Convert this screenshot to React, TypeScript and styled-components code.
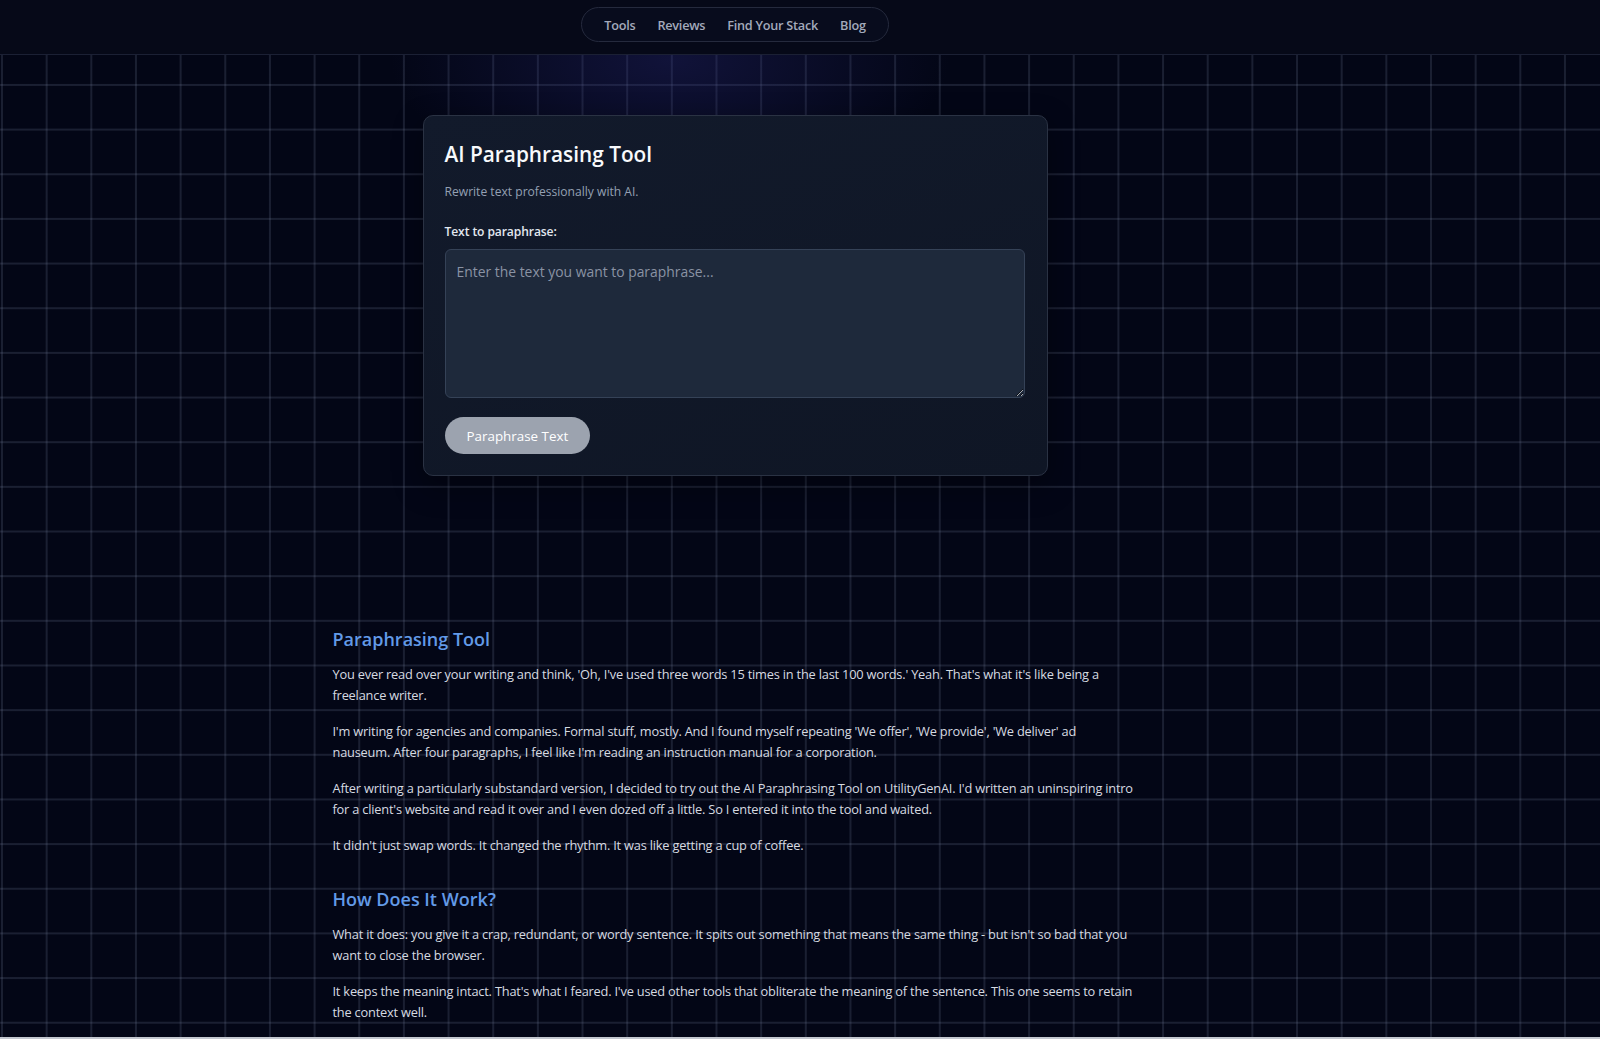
import { useState } from "react";
import styled, { createGlobalStyle } from "styled-components";

const GlobalStyle = createGlobalStyle`
  html, body {
    margin: 0;
    padding: 0;
  }

  body {
    min-height: 100vh;
    background-color: #030616;
    background-image:
      radial-gradient(ellipse 280px 130px at 670px 60px, rgba(45, 45, 130, 0.33), transparent 100%),
      linear-gradient(to right, rgba(120, 132, 160, 0.2) 1.5px, transparent 1.5px),
      linear-gradient(to bottom, rgba(120, 132, 160, 0.2) 1.5px, transparent 1.5px);
    background-size: auto, 44.66px 44.66px, 44.66px 44.66px;
    background-position: 0 0, 1px 39.3px, 1px 39.3px;
    font-family: "Open Sans", "Noto Sans", sans-serif;
    color: #d1d5db;
    overflow: hidden;
  }
`;

const Header = styled.header`
  height: 55px;
  box-sizing: border-box;
  border-bottom: 1px solid #1b2034;
  background: #060918;
  padding: 7px 130px 0 0;
  display: flex;
  justify-content: center;
  align-items: flex-start;
`;

const NavPill = styled.nav`
  display: flex;
  align-items: center;
  gap: 22px;
  height: 35px;
  padding: 0 22px;
  box-sizing: border-box;
  border: 1px solid #252a3d;
  border-radius: 18px;
  background: #080c1d;
`;

const NavLink = styled.a`
  font-size: 12.7px;
  font-weight: 600;
  letter-spacing: -0.25px;
  color: #a3aabb;
  text-decoration: none;
  cursor: pointer;
`;

const Page = styled.main`
  padding-right: 130px;
  display: flex;
  flex-direction: column;
  align-items: center;
`;

const Card = styled.section`
  width: 625px;
  box-sizing: border-box;
  margin-top: 60px;
  padding: 23.5px 22px 20.4px 21px;
  border: 1px solid #2a3243;
  border-radius: 10px;
  background: linear-gradient(160deg, #121a2b 0%, #0f1625 100%);
  box-shadow: 0 10px 30px rgba(0, 0, 0, 0.35);
  display: flex;
  flex-direction: column;
  align-items: flex-start;
`;

const CardTitle = styled.h1`
  margin: 0;
  font-size: 20.8px;
  line-height: 28px;
  font-weight: 600;
  color: #f8fafc;
`;

const CardSubtitle = styled.p`
  margin: 14px 0 0;
  font-size: 12.1px;
  line-height: 20px;
  color: #94a0b3;
`;

const Label = styled.label`
  margin-top: 20px;
  font-size: 12.1px;
  line-height: 20px;
  font-weight: 600;
  letter-spacing: -0.1px;
  color: #e2e8f0;
`;

const TextArea = styled.textarea`
  margin-top: 7.7px;
  width: 100%;
  height: 148.4px;
  box-sizing: border-box;
  padding: 10px 11px;
  border: 1px solid #354257;
  border-radius: 6px;
  background: #1e293b;
  color: #e2e8f0;
  font-family: "Open Sans", "Noto Sans", sans-serif;
  font-size: 13.9px;
  line-height: 24px;
  outline: none;

  &::placeholder {
    color: #8a93a4;
  }
`;

const Button = styled.button<{ $disabled: boolean }>`
  margin-top: 19.6px;
  height: 37px;
  padding: 0 22px;
  border: none;
  border-radius: 999px;
  background: ${(p) => (p.$disabled ? "#9ca3af" : "#3b82f6")};
  color: #ffffff;
  font-family: "Open Sans", "Noto Sans", sans-serif;
  font-size: 13.4px;
  font-weight: 500;
  cursor: ${(p) => (p.$disabled ? "not-allowed" : "pointer")};
`;

const Article = styled.article`
  width: 802px;
  margin-top: 149px;
  margin-right: 3px;
`;

const SectionHeading = styled.h2<{ $first?: boolean }>`
  margin: ${(p) => (p.$first ? "0" : "29px")} 0 11.6px;
  font-size: 18px;
  line-height: 28px;
  font-weight: 600;
  color: #629ae8;
`;

const Paragraph = styled.p`
  margin: 0 0 16px;
  font-size: 12.8px;
  letter-spacing: -0.2px;
  line-height: 20.5px;
  color: #d6dae1;
`;

const BottomEdge = styled.div`
  position: fixed;
  left: 0;
  right: 0;
  bottom: 0;
  height: 2px;
  background: #c3c7cf;
`;

const navItems = ["Tools", "Reviews", "Find Your Stack", "Blog"];

export default function App() {
  const [text, setText] = useState("");

  return (
    <>
      <GlobalStyle />
      <Header>
        <NavPill>
          {navItems.map((item) => (
            <NavLink key={item}>{item}</NavLink>
          ))}
        </NavPill>
      </Header>

      <Page>
        <Card>
          <CardTitle>AI Paraphrasing Tool</CardTitle>
          <CardSubtitle>Rewrite text professionally with AI.</CardSubtitle>
          <Label htmlFor="paraphrase-input">Text to paraphrase:</Label>
          <TextArea
            id="paraphrase-input"
            placeholder="Enter the text you want to paraphrase..."
            value={text}
            onChange={(e) => setText(e.target.value)}
          />
          <Button $disabled={!text.trim()} disabled={!text.trim()}>
            Paraphrase Text
          </Button>
        </Card>

        <Article>
          <SectionHeading $first>Paraphrasing Tool</SectionHeading>
          <Paragraph>
            You ever read over your writing and think, 'Oh, I've used three words 15 times in the
            last 100 words.' Yeah. That's what it's like being a freelance writer.
          </Paragraph>
          <Paragraph>
            I'm writing for agencies and companies. Formal stuff, mostly. And I found myself
            repeating 'We offer', 'We provide', 'We deliver' ad nauseum. After four paragraphs, I
            feel like I'm reading an instruction manual for a corporation.
          </Paragraph>
          <Paragraph>
            After writing a particularly substandard version, I decided to try out the AI
            Paraphrasing Tool on UtilityGenAI. I'd written an uninspiring intro for a client's
            website and read it over and I even dozed off a little. So I entered it into the tool
            and waited.
          </Paragraph>
          <Paragraph>
            It didn't just swap words. It changed the rhythm. It was like getting a cup of coffee.
          </Paragraph>

          <SectionHeading>How Does It Work?</SectionHeading>
          <Paragraph>
            What it does: you give it a crap, redundant, or wordy sentence. It spits out something
            that means the same thing - but isn't so bad that you want to close the browser.
          </Paragraph>
          <Paragraph>
            It keeps the meaning intact. That's what I feared. I've used other tools that
            obliterate the meaning of the sentence. This one seems to retain the context well.
          </Paragraph>
        </Article>
      </Page>
      <BottomEdge />
    </>
  );
}
